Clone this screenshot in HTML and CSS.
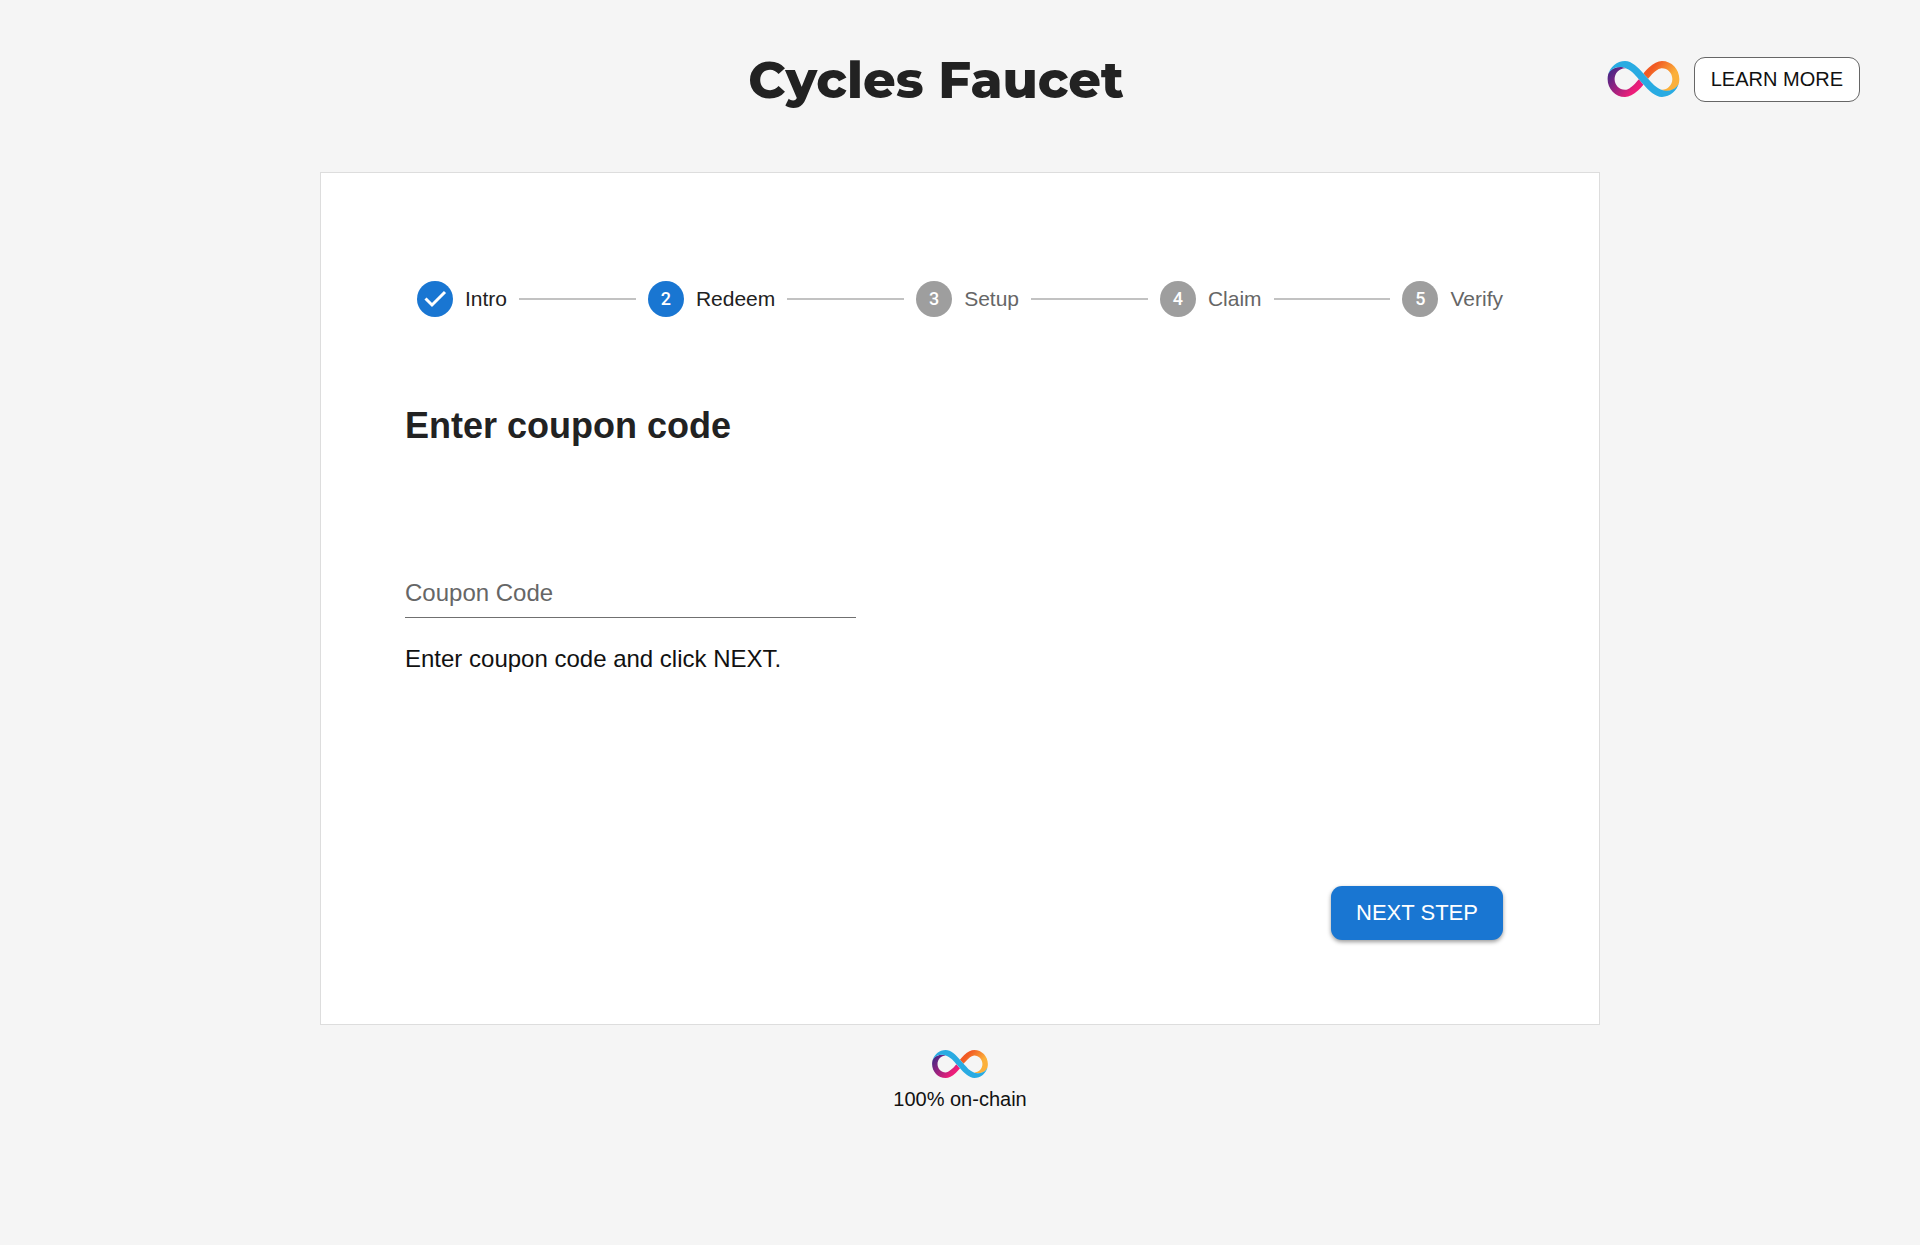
FILE: index.html
```html
<!DOCTYPE html>
<html lang="en">
<head>
<meta charset="utf-8">
<meta name="viewport" content="width=device-width, initial-scale=1">
<title>Cycles Faucet</title>
<link rel="stylesheet" href="styles.css">
</head>
<body>
<svg class="sprite" width="0" height="0" aria-hidden="true">
  <defs>
    <linearGradient id="orange" gradientUnits="userSpaceOnUse" x1="190" y1="8" x2="350" y2="145">
      <stop offset=".21" stop-color="#f15a24"/>
      <stop offset=".68" stop-color="#fbb03b"/>
    </linearGradient>
    <linearGradient id="pink" gradientUnits="userSpaceOnUse" x1="168" y1="172" x2="8" y2="35">
      <stop offset=".21" stop-color="#ed1e79"/>
      <stop offset=".89" stop-color="#522785"/>
    </linearGradient>
    <symbol id="infinity" viewBox="0 0 359 180">
      <path fill="url(#orange)" d="M271.6,0c-20,0-41.9,10.9-65,32.4c-10.9,10.1-20.5,21.1-27.5,29.8c0,0,11.2,12.9,23.5,26.8c6.7-8.4,16.2-19.8,27.3-30.1c20.5-19.2,33.9-23.1,41.6-23.1c28.8,0,52.2,24.2,52.2,54.1c0,29.6-23.4,53.8-52.2,54.1c-1.4,0-3-0.2-5-0.6c8.4,3.9,17.5,6.7,26,6.7c52.8,0,63.2-36.5,63.8-39.1c1.5-6.7,2.4-13.7,2.4-20.9C358.6,40.4,319.6,0,271.6,0z"/>
      <path fill="url(#pink)" d="M87.1,180c20,0,41.9-10.9,65-32.4c10.9-10.1,20.5-21.1,27.5-29.8c0,0-11.2-12.9-23.5-26.8c-6.7,8.4-16.2,19.8-27.3,30.1c-20.5,19-34,23.1-41.6,23.1c-28.8,0-52.2-24.2-52.2-54.1c0-29.6,23.4-53.8,52.2-54.1c1.4,0,3,0.2,5,0.6c-8.4-3.9-17.5-6.7-26-6.7C13.4,29.6,3,66.1,2.4,68.8C0.9,75.5,0,82.5,0,89.7C0,139.6,39,180,87.1,180z"/>
      <path fill="#29abe2" d="M127.3,59.7c-5.8-5.6-34-28.5-61-29.3C18.1,29.2,4,64.2,2.7,68.7C12.1,29.5,46.4,0.2,87.2,0c33.3,0,67,32.7,91.9,62.2c0,0,0.1-0.1,0.1-0.1c0,0,11.2,12.9,23.5,26.8c0,0,14,16.5,28.8,31c5.8,5.6,33.9,28.2,60.9,29c49.5,1.4,63.2-35.6,63.9-38.4c-9.1,39.5-43.6,68.9-84.6,69.1c-33.3,0-67-32.7-92-62.2c0,0.1-0.1,0.1-0.1,0.2c0,0-11.2-12.9-23.5-26.8C156.2,90.8,142.2,74.2,127.3,59.7z"/>
    </symbol>
  </defs>
</svg>

<header class="header">
  <h1 class="title">Cycles Faucet</h1>
  <div class="actions">
    <svg class="logo" role="img" aria-label="Internet Computer"><use href="#infinity"/></svg>
    <button class="learn" type="button">LEARN MORE</button>
  </div>
</header>

<main class="card">
  <ol class="stepper">
    <li class="step done">
      <span class="badge"><svg class="check" viewBox="0 0 36 36" aria-hidden="true"><path d="M8.5 17.5l6.5 6.5 13-13"/></svg></span>
      <span>Intro</span>
    </li>
    <li class="line" aria-hidden="true"></li>
    <li class="step done" aria-current="step"><span class="badge">2</span><span>Redeem</span></li>
    <li class="line" aria-hidden="true"></li>
    <li class="step"><span class="badge">3</span><span>Setup</span></li>
    <li class="line" aria-hidden="true"></li>
    <li class="step"><span class="badge">4</span><span>Claim</span></li>
    <li class="line" aria-hidden="true"></li>
    <li class="step"><span class="badge">5</span><span>Verify</span></li>
  </ol>
  <form class="form">
    <h2 class="heading">Enter coupon code</h2>
    <input class="coupon" type="text" placeholder="Coupon Code" aria-label="Coupon Code" aria-describedby="hint">
    <p class="hint" id="hint">Enter coupon code and click NEXT.</p>
    <button class="next" type="button">NEXT STEP</button>
  </form>
</main>

<footer class="footer">
  <svg class="logo small" aria-hidden="true"><use href="#infinity"/></svg>
  <span>100% on-chain</span>
</footer>
</body>
</html>
```
FILE: styles.css
```css
* {
  box-sizing: border-box;
}

body {
  margin: 0;
  background: #f5f5f5;
  color: #111;
  font-family: "Liberation Sans", Arial, sans-serif;
  font-size: 20px;
  line-height: 24px;
}

.sprite {
  position: absolute;
}

.header {
  display: grid;
  grid-template-columns: 1fr auto 1fr;
  align-items: center;
  padding: 48px 60px 60px 12px;
}

.title {
  grid-column: 2;
  margin: 0;
  color: #222;
  font-family: Montserrat, Inter, sans-serif;
  font-size: 51px;
  font-weight: 800;
  line-height: 64px;
}

.actions {
  display: flex;
  justify-content: flex-end;
  align-items: center;
  gap: 14px;
  padding-bottom: 2px;
}

.logo {
  width: 73px;
  height: 36px;
}

.logo.small {
  width: 56px;
  height: 28px;
}

.learn {
  height: 45px;
  padding: 0 16px;
  border: 1px solid #666;
  border-radius: 11px;
  background: #fff;
  color: #111;
  font: inherit;
}

.card {
  width: 1280px;
  max-width: 100%;
  margin: 0 auto;
  padding: 108px 84px 84px;
  border: 1px solid #ddd;
  background: #fff;
}

.stepper {
  display: flex;
  align-items: center;
  gap: 12px;
  margin: 0;
  padding: 0 12px;
  list-style: none;
  color: #666;
  font-size: 21px;
}

.step {
  display: flex;
  align-items: center;
  gap: 12px;
}

.step.done {
  color: #212121;
}

.badge {
  display: grid;
  place-items: center;
  width: 36px;
  height: 36px;
  border-radius: 50%;
  background: #9e9e9e;
  color: #fff;
  font-family: Roboto, "Liberation Sans", sans-serif;
  font-size: 18px;
  font-weight: 500;
}

.done .badge {
  background: #1976d2;
}

.check {
  width: 36px;
  height: 36px;
  fill: none;
  stroke: #fff;
  stroke-width: 3;
}

.line {
  flex: 1;
  border-top: 2px solid #c2c2c2;
}

.form {
  display: flex;
  flex-direction: column;
  align-items: flex-start;
  font-size: 24px;
}

.heading {
  margin: 85px 0 119px;
  color: #222;
  font-size: 36px;
  line-height: 48px;
}

.coupon {
  width: 451px;
  max-width: 100%;
  height: 49px;
  padding: 0;
  border: 0;
  border-bottom: 1px solid #707070;
  background: transparent;
  color: inherit;
  font: inherit;
  outline: 0;
}

.coupon::placeholder {
  color: #666;
  opacity: 1;
}

.hint {
  margin: 23px 0 0;
  line-height: 36px;
}

.next {
  align-self: flex-end;
  width: 172px;
  height: 54px;
  margin: 209px 12px 0 0;
  padding: 0;
  border: 0;
  border-radius: 11px;
  background: #1976d2;
  box-shadow: 0 2px 4px rgba(0, 0, 0, .4);
  color: #fff;
  font: inherit;
  font-size: 22px;
}

.footer {
  display: flex;
  flex-direction: column;
  align-items: center;
  gap: 9px;
  padding: 25px 24px 24px;
}
```
